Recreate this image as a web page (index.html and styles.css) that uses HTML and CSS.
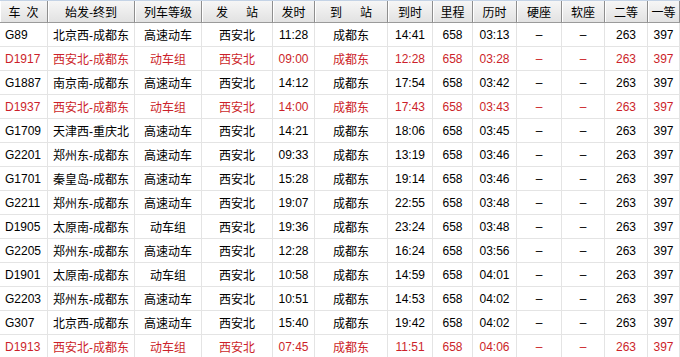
FILE: index.html
```html
<!DOCTYPE html>
<html lang="zh-CN">
<head>
<meta charset="utf-8">
<title>车次列表</title>
<link rel="stylesheet" href="styles.css">
</head>
<body>
<div class="table">
  <div class="row head">
    <div class="c">车&ensp;次</div>
    <div class="c">始发-终到</div>
    <div class="c">列车等级</div>
    <div class="c">发&emsp;&ensp;站</div>
    <div class="c">发时</div>
    <div class="c">到&emsp;&ensp;站</div>
    <div class="c">到时</div>
    <div class="c">里程</div>
    <div class="c">历时</div>
    <div class="c">硬座</div>
    <div class="c">软座</div>
    <div class="c">二等</div>
    <div class="c">一等</div>
  </div>
  <div class="row"><div class="c no">G89</div><div class="c">北京西-成都东</div><div class="c">高速动车</div><div class="c">西安北</div><div class="c">11:28</div><div class="c">成都东</div><div class="c">14:41</div><div class="c">658</div><div class="c">03:13</div><div class="c">–</div><div class="c">–</div><div class="c">263</div><div class="c">397</div></div>
  <div class="row red"><div class="c no">D1917</div><div class="c">西安北-成都东</div><div class="c">动车组</div><div class="c">西安北</div><div class="c">09:00</div><div class="c">成都东</div><div class="c">12:28</div><div class="c">658</div><div class="c">03:28</div><div class="c">–</div><div class="c">–</div><div class="c">263</div><div class="c">397</div></div>
  <div class="row"><div class="c no">G1887</div><div class="c">南京南-成都东</div><div class="c">高速动车</div><div class="c">西安北</div><div class="c">14:12</div><div class="c">成都东</div><div class="c">17:54</div><div class="c">658</div><div class="c">03:42</div><div class="c">–</div><div class="c">–</div><div class="c">263</div><div class="c">397</div></div>
  <div class="row red"><div class="c no">D1937</div><div class="c">西安北-成都东</div><div class="c">动车组</div><div class="c">西安北</div><div class="c">14:00</div><div class="c">成都东</div><div class="c">17:43</div><div class="c">658</div><div class="c">03:43</div><div class="c">–</div><div class="c">–</div><div class="c">263</div><div class="c">397</div></div>
  <div class="row"><div class="c no">G1709</div><div class="c">天津西-重庆北</div><div class="c">高速动车</div><div class="c">西安北</div><div class="c">14:21</div><div class="c">成都东</div><div class="c">18:06</div><div class="c">658</div><div class="c">03:45</div><div class="c">–</div><div class="c">–</div><div class="c">263</div><div class="c">397</div></div>
  <div class="row"><div class="c no">G2201</div><div class="c">郑州东-成都东</div><div class="c">高速动车</div><div class="c">西安北</div><div class="c">09:33</div><div class="c">成都东</div><div class="c">13:19</div><div class="c">658</div><div class="c">03:46</div><div class="c">–</div><div class="c">–</div><div class="c">263</div><div class="c">397</div></div>
  <div class="row"><div class="c no">G1701</div><div class="c">秦皇岛-成都东</div><div class="c">高速动车</div><div class="c">西安北</div><div class="c">15:28</div><div class="c">成都东</div><div class="c">19:14</div><div class="c">658</div><div class="c">03:46</div><div class="c">–</div><div class="c">–</div><div class="c">263</div><div class="c">397</div></div>
  <div class="row"><div class="c no">G2211</div><div class="c">郑州东-成都东</div><div class="c">高速动车</div><div class="c">西安北</div><div class="c">19:07</div><div class="c">成都东</div><div class="c">22:55</div><div class="c">658</div><div class="c">03:48</div><div class="c">–</div><div class="c">–</div><div class="c">263</div><div class="c">397</div></div>
  <div class="row"><div class="c no">D1905</div><div class="c">太原南-成都东</div><div class="c">动车组</div><div class="c">西安北</div><div class="c">19:36</div><div class="c">成都东</div><div class="c">23:24</div><div class="c">658</div><div class="c">03:48</div><div class="c">–</div><div class="c">–</div><div class="c">263</div><div class="c">397</div></div>
  <div class="row"><div class="c no">G2205</div><div class="c">郑州东-成都东</div><div class="c">高速动车</div><div class="c">西安北</div><div class="c">12:28</div><div class="c">成都东</div><div class="c">16:24</div><div class="c">658</div><div class="c">03:56</div><div class="c">–</div><div class="c">–</div><div class="c">263</div><div class="c">397</div></div>
  <div class="row"><div class="c no">D1901</div><div class="c">太原南-成都东</div><div class="c">动车组</div><div class="c">西安北</div><div class="c">10:58</div><div class="c">成都东</div><div class="c">14:59</div><div class="c">658</div><div class="c">04:01</div><div class="c">–</div><div class="c">–</div><div class="c">263</div><div class="c">397</div></div>
  <div class="row"><div class="c no">G2203</div><div class="c">郑州东-成都东</div><div class="c">高速动车</div><div class="c">西安北</div><div class="c">10:51</div><div class="c">成都东</div><div class="c">14:53</div><div class="c">658</div><div class="c">04:02</div><div class="c">–</div><div class="c">–</div><div class="c">263</div><div class="c">397</div></div>
  <div class="row"><div class="c no">G307</div><div class="c">北京西-成都东</div><div class="c">高速动车</div><div class="c">西安北</div><div class="c">15:40</div><div class="c">成都东</div><div class="c">19:42</div><div class="c">658</div><div class="c">04:02</div><div class="c">–</div><div class="c">–</div><div class="c">263</div><div class="c">397</div></div>
  <div class="row red"><div class="c no">D1913</div><div class="c">西安北-成都东</div><div class="c">动车组</div><div class="c">西安北</div><div class="c">07:45</div><div class="c">成都东</div><div class="c">11:51</div><div class="c">658</div><div class="c">04:06</div><div class="c">–</div><div class="c">–</div><div class="c">263</div><div class="c">397</div></div>
</div>
</body>
</html>
```

FILE: styles.css
```css
html, body {
  margin: 0;
  padding: 0;
  background: #ffffff;
}
body {
  width: 680px;
  height: 357px;
  overflow: hidden;
  font-family: "Liberation Sans", "Noto Sans CJK SC", sans-serif;
  font-size: 12px;
  color: #000000;
}
.table {
  display: flex;
  flex-direction: column;
}
.row {
  display: grid;
  grid-template-columns: 48px 87px 67px 71px 42px 73px 45px 40px 44px 45px 43px 43px 32px;
  height: 24px;
}
.c {
  box-sizing: border-box;
  border-right: 1px solid #e4e4e4;
  border-bottom: 1px solid #e4e4e4;
  display: flex;
  align-items: center;
  justify-content: center;
  white-space: nowrap;
  overflow: hidden;
}
.c.no {
  justify-content: flex-start;
  padding-left: 5px;
}
.red {
  color: #cc1f2a;
}
.head {
  height: 23px;
  border-top: 1px solid #c4d3e6;
  box-sizing: border-box;
}
.head .c {
  background: linear-gradient(#f6f6f6, #e2e2e2);
  border-right: 1px solid #8e8e8e;
  border-bottom: 1px solid #9a9a9a;
  box-shadow: inset 1px 0 #ffffff;
  font-family: "Noto Sans CJK SC", sans-serif;
}
```
